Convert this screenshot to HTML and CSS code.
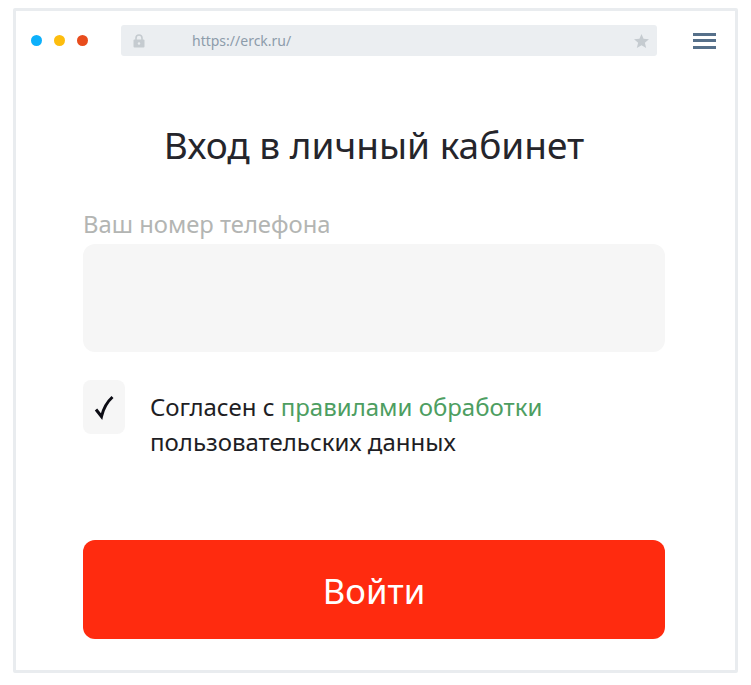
FILE: index.html
```html
<!DOCTYPE html>
<html lang="ru">
<head>
<meta charset="utf-8">
<title>Вход в личный кабинет</title>
<link rel="stylesheet" href="styles.css">
</head>
<body>
<div class="frame">
  <header class="toolbar">
    <div class="dots">
      <span class="dot dot-blue"></span>
      <span class="dot dot-yellow"></span>
      <span class="dot dot-red"></span>
    </div>
    <div class="address">
      <svg class="lock" viewBox="0 0 12 14" width="12" height="14"><path d="M3 6V4a3 3 0 0 1 6 0v2" fill="none" stroke="#c5cbd0" stroke-width="1.6"/><rect x="0.5" y="5.5" width="11" height="8" rx="1" fill="#c5cbd0"/><circle cx="6" cy="9.5" r="1.2" fill="#e9ecef"/></svg>
      <span class="url">https://erck.ru/</span>
      <svg class="star" viewBox="0 0 16 15" width="15" height="14"><path d="M8 0l2.2 5.2 5.8.5-4.4 3.700 1.400 5.600L8 12l-5 3 1.400-5.600L0 5.700l5.800-.5z" fill="#c5cbd0"/></svg>
    </div>
    <div class="burger"><span></span><span></span><span></span></div>
  </header>
  <main class="form">
    <h1 class="title">Вход в личный кабинет</h1>
    <label class="label">Ваш номер телефона</label>
    <div class="input"></div>
    <div class="agree">
      <div class="check">
        <svg viewBox="0 0 22 26" width="22" height="26"><path d="M3 15.500l5.500 7C10.500 14 14.500 7.500 19.500 3" fill="none" stroke="#0c0c14" stroke-width="3"/></svg>
      </div>
      <p class="agree-text">Согласен с <a class="link">правилами обработки</a><br>пользовательских данных</p>
    </div>
    <button class="submit">Войти</button>
  </main>
</div>
</body>
</html>
```
FILE: styles.css
```css
* { box-sizing: border-box; }
html, body { margin: 0; padding: 0; background: #fff; }
body { font-family: "Noto Sans", "Open Sans", sans-serif; }
.frame {
  width: 725px;
  height: 665px;
  margin: 8px 0 0 13px;
  border: 3px solid #e9ecef;
  border-radius: 2px;
  background: #fff;
}
.toolbar {
  display: flex;
  align-items: center;
  height: 31px;
  margin-top: 14px;
  padding-left: 15px;
}
.dots { display: flex; gap: 12px; width: 90px; }
.dot { width: 11px; height: 11px; border-radius: 50%; }
.dot-blue { background: #0cb0fb; }
.dot-yellow { background: #fdbd0e; }
.dot-red { background: #e84c1c; }
.address {
  display: flex;
  align-items: center;
  width: 536px;
  height: 31px;
  padding: 0 8px 0 12px;
  background: #ebeef1;
  border-radius: 3px;
}
.url { flex: 1; margin-left: 47px; font-size: 14px; color: #8d9cab; }
.burger { display: flex; flex-direction: column; gap: 3.500px; width: 23px; margin-left: 36px; }
.burger span { height: 3px; background: #56708a; }
.form { width: 582px; margin: 0 0 0 67px; }
.title {
  margin: 65px 0 0;
  font-size: 37px;
  line-height: 48px;
  font-weight: 400;
  text-align: center;
  color: #25252b;
}
.label { display: block; margin-top: 40px; font-size: 23.800px; line-height: 30px; color: #b3b5b3; }
.input { height: 108px; margin-top: 5px; background: #f6f6f6; border-radius: 12px; }
.agree { display: flex; margin-top: 28px; }
.check {
  display: flex;
  align-items: center;
  justify-content: center;
  flex: none;
  width: 42px;
  height: 54px;
  background: #f6f6f6;
  border-radius: 8px;
}
.agree-text { margin: 9px 0 0 25px; font-size: 24px; line-height: 35px; color: #1e1e24; }
.link { color: #4d9e61; }
.submit {
  display: block;
  width: 100%;
  height: 99px;
  margin-top: 81px;
  padding: 2px 0 0;
  border: 0;
  border-radius: 12px;
  background: #ff2b0f;
  color: #fff;
  font-family: inherit;
  font-size: 34.700px;
}
```
